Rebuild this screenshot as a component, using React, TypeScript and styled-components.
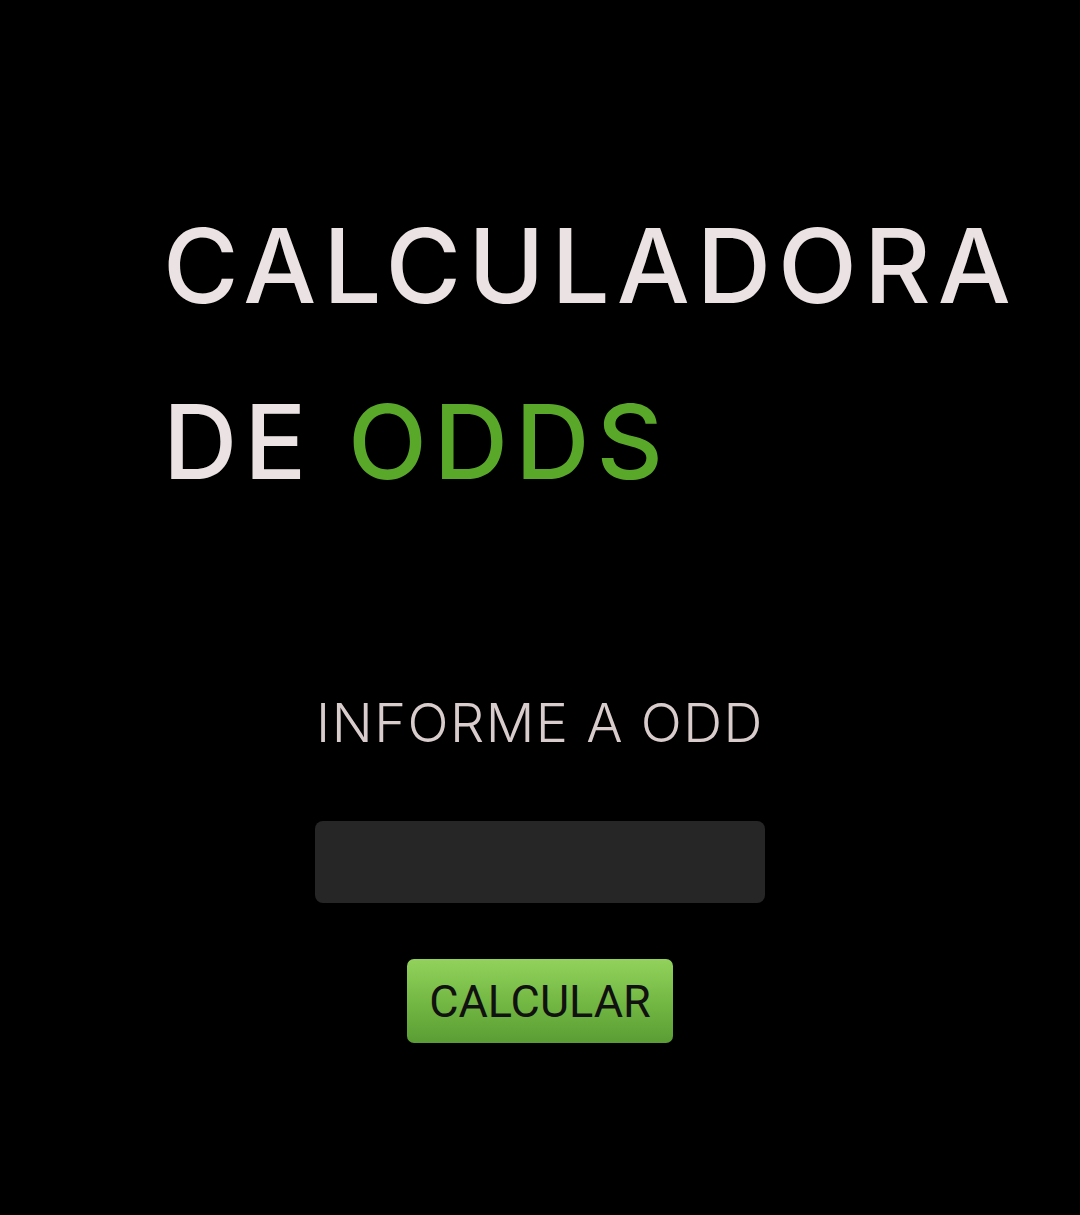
import { useState } from 'react'
import styled, { createGlobalStyle } from 'styled-components'

const GlobalStyle = createGlobalStyle`
  html, body {
    margin: 0;
    padding: 0;
    background: #000;
  }
  body {
    font-family: Inter, 'Noto Sans', sans-serif;
  }
`

const Page = styled.div`
  min-height: 1215px;
  background: #000;
  display: flex;
  flex-direction: column;
  align-items: center;
`

const Title = styled.h1`
  align-self: flex-start;
  margin: 178px 0 0 163px;
  font-family: Inter, 'Noto Sans', sans-serif;
  font-weight: 500;
  font-size: 103px;
  line-height: 176px;
  letter-spacing: 7px;
  color: #ebe3e3;
`

const Highlight = styled.span`
  color: #5aa829;
`

const Form = styled.div`
  margin-top: 163px;
  display: flex;
  flex-direction: column;
  align-items: center;
`

const Label = styled.label`
  font-family: Inter, 'Noto Sans', sans-serif;
  font-weight: 300;
  font-size: 54px;
  line-height: 60px;
  letter-spacing: 1.5px;
  color: #d9cccc;
`

const Field = styled.input`
  margin-top: 68px;
  width: 450px;
  height: 82px;
  box-sizing: border-box;
  border: none;
  border-radius: 8px;
  background: #262626;
  color: #eee;
  font-size: 36px;
  padding: 0 16px;
  outline: none;
`

const Button = styled.button`
  margin-top: 56px;
  width: 266px;
  height: 84px;
  border: none;
  border-radius: 7px;
  background: linear-gradient(180deg, #92d25c 0%, #74b944 50%, #5a9d34 100%);
  color: #111;
  font-family: Roboto, 'Liberation Sans', sans-serif;
  font-weight: 400;
  font-size: 45px;
  cursor: pointer;
`

export default function App() {
  const [odd, setOdd] = useState('')

  return (
    <Page>
      <GlobalStyle />
      <Title>
        CALCULADORA
        <br />
        DE <Highlight>ODDS</Highlight>
      </Title>
      <Form>
        <Label htmlFor="odd">INFORME A ODD</Label>
        <Field id="odd" value={odd} onChange={(e) => setOdd(e.target.value)} />
        <Button type="button">CALCULAR</Button>
      </Form>
    </Page>
  )
}
